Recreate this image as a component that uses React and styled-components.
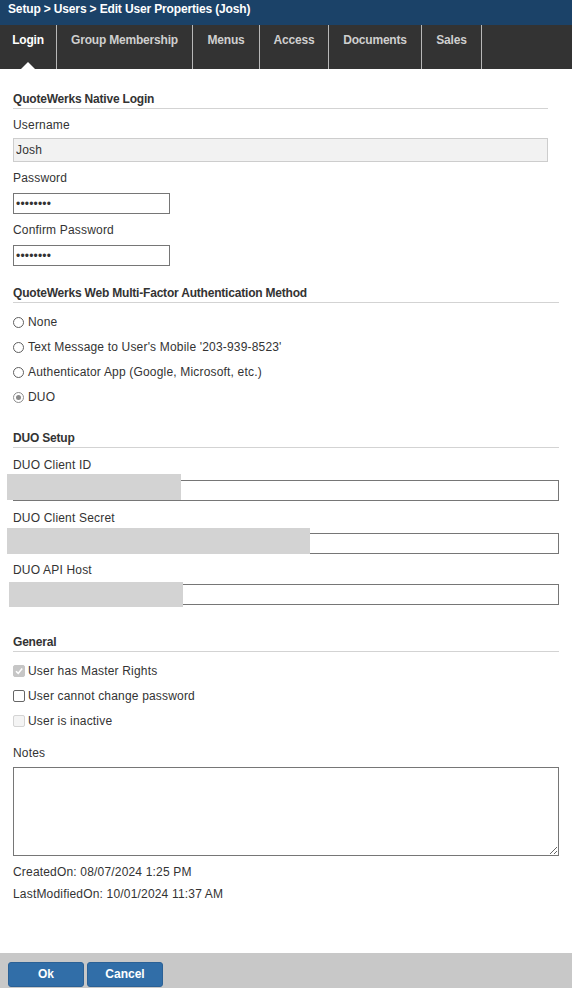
import React from "react";
import styled, { createGlobalStyle, css } from "styled-components";

const GlobalStyle = createGlobalStyle`
  html, body {
    margin: 0;
    padding: 0;
    background: #fff;
  }
  body {
    font-family: "Liberation Sans", Arial, sans-serif;
    font-size: 12px;
    letter-spacing: 0.18px;
    color: #333;
  }
  * {
    box-sizing: border-box;
  }
`;

const tabs = [
  { label: "Login", width: 57, active: true },
  { label: "Group Membership", width: 136 },
  { label: "Menus", width: 67 },
  { label: "Access", width: 69 },
  { label: "Documents", width: 93 },
  { label: "Sales", width: 60 },
];

const mfaOptions = [
  { label: "None" },
  { label: "Text Message to User's Mobile '203-939-8523'" },
  { label: "Authenticator App (Google, Microsoft, etc.)" },
  { label: "DUO", checked: true },
];

const duoFields = [
  { label: "DUO Client ID", top: 10, gap: 8, hide: { top: -6, left: -6, w: 174, h: 26 } },
  { label: "DUO Client Secret", top: 10, gap: 8, hide: { top: -5, left: -6, w: 303, h: 26 } },
  { label: "DUO API Host", top: 9, gap: 7, hide: { top: -2, left: -4, w: 174, h: 25 } },
];

export default function App() {
  return (
    <Page>
      <GlobalStyle />
      <TitleBar>Setup &gt; Users &gt; Edit User Properties (Josh)</TitleBar>
      <TabBar>
        {tabs.map((t) => (
          <Tab key={t.label} $w={t.width} $active={t.active}>
            {t.label}
          </Tab>
        ))}
      </TabBar>

      <Form>
        <Section $w={535}>
          <SectionTitle $top={0}>QuoteWerks Native Login</SectionTitle>
          <Label $top={9}>Username</Label>
          <TextInput $top={6} $h={24} $muted readOnly value='Josh' />
          <Label $top={9}>Password</Label>
          <TextInput type='password' $top={8} $h={21} $w={157} readOnly value='12345678' />
          <Label $top={9}>Confirm Password</Label>
          <TextInput type='password' $top={8} $h={21} $w={157} readOnly value='12345678' />
        </Section>

        <SectionTitle $top={20}>QuoteWerks Web Multi-Factor Authentication Method</SectionTitle>
        {mfaOptions.map((o, i) => (
          <OptionRow key={o.label} $top={i === 0 ? 12 : 11}>
            <RadioMark $checked={o.checked} />
            {o.label}
          </OptionRow>
        ))}

        <SectionTitle $top={27}>DUO Setup</SectionTitle>
        {duoFields.map((f) => (
          <React.Fragment key={f.label}>
            <Label $top={f.top}>{f.label}</Label>
            <InputWrap $top={f.gap}>
              <TextInput $top={0} $h={21} readOnly value='' />
              <Redacted $top={f.hide.top} $left={f.hide.left} $w={f.hide.w} $h={f.hide.h} />
            </InputWrap>
          </React.Fragment>
        ))}

        <SectionTitle $top={30}>General</SectionTitle>
        <OptionRow $top={12}>
          <CheckMark $checked $disabled>
            <svg width='10' height='10' viewBox='0 0 10 10'>
              <polyline points='2,5.2 4.2,7.4 8.2,2.6' fill='none' stroke='#fff' strokeWidth='1.6' />
            </svg>
          </CheckMark>
          User has Master Rights
        </OptionRow>
        <OptionRow $top={11}>
          <CheckMark />
          User cannot change password
        </OptionRow>
        <OptionRow $top={11}>
          <CheckMark $disabled />
          User is inactive
        </OptionRow>

        <Label $top={18}>Notes</Label>
        <Notes />

        <Meta $top={9}>CreatedOn: 08/07/2024 1:25 PM</Meta>
        <Meta $top={8}>LastModifiedOn: 10/01/2024 11:37 AM</Meta>
      </Form>

      <Footer>
        <Button>Ok</Button>
        <Button>Cancel</Button>
      </Footer>
    </Page>
  );
}

const Page = styled.div`
  min-height: 100vh;
  display: flex;
  flex-direction: column;
`;

const TitleBar = styled.header`
  height: 25px;
  padding: 2px 8px 0;
  background: #1b4268;
  color: #fff;
  font-weight: bold;
  line-height: 14px;
  letter-spacing: -0.15px;
`;

const TabBar = styled.nav`
  display: flex;
  height: 44px;
  background: #333;
`;

const Tab = styled.div`
  position: relative;
  width: ${({ $w }) => $w}px;
  border-right: 1px solid #b8b8b8;
  padding-top: 8px;
  text-align: center;
  font-weight: bold;
  line-height: 14px;
  letter-spacing: -0.2px;
  white-space: nowrap;
  color: ${({ $active }) => ($active ? "#fff" : "#cfcfcf")};

  ${({ $active }) =>
    $active &&
    css`
      &::after {
        content: "";
        position: absolute;
        bottom: 0;
        left: 50%;
        transform: translateX(-50%);
        border-left: 7px solid transparent;
        border-right: 7px solid transparent;
        border-bottom: 7px solid #fff;
      }
    `}
`;

const Form = styled.main`
  display: flex;
  flex-direction: column;
  padding: 23px 13px 0;
`;

const Section = styled.section`
  display: flex;
  flex-direction: column;
  width: ${({ $w }) => $w}px;
`;

const SectionTitle = styled.h3`
  margin: ${({ $top }) => $top}px 0 0;
  padding-bottom: 2px;
  border-bottom: 1px solid #d3d3d3;
  font-size: 12px;
  line-height: 14px;
  font-weight: bold;
  letter-spacing: -0.2px;
  color: #333;
`;

const Label = styled.label`
  display: block;
  margin-top: ${({ $top }) => $top}px;
  line-height: 14px;
`;

const TextInput = styled.input`
  display: block;
  margin: ${({ $top }) => $top}px 0 0;
  width: ${({ $w }) => ($w ? `${$w}px` : "100%")};
  height: ${({ $h }) => $h}px;
  padding: 0 2px;
  border: 1px solid ${({ $muted }) => ($muted ? "#cdcdcd" : "#767676")};
  border-radius: 0;
  background: ${({ $muted }) => ($muted ? "#f2f2f2" : "#fff")};
  font-family: "Liberation Sans", Arial, sans-serif;
  font-size: 12px;
  letter-spacing: 0.18px;
  color: #333;
  outline: none;
`;

const InputWrap = styled.div`
  position: relative;
  margin-top: ${({ $top }) => $top}px;
`;

const Redacted = styled.div`
  position: absolute;
  top: ${({ $top }) => $top}px;
  left: ${({ $left }) => $left}px;
  width: ${({ $w }) => $w}px;
  height: ${({ $h }) => $h}px;
  background: #d3d3d3;
`;

const OptionRow = styled.label`
  display: flex;
  align-items: center;
  gap: 4px;
  height: 14px;
  margin-top: ${({ $top }) => $top}px;
  line-height: 14px;
  white-space: nowrap;
`;

const RadioMark = styled.span`
  position: relative;
  flex: none;
  width: 11px;
  height: 11px;
  border-radius: 50%;
  border: 1px solid ${({ $checked }) => ($checked ? "#8d8d8d" : "#5f5f5f")};
  background: #fff;

  ${({ $checked }) =>
    $checked &&
    css`
      &::after {
        content: "";
        position: absolute;
        inset: 2px;
        border-radius: 50%;
        background: #8a8a8a;
      }
    `}
`;

const CheckMark = styled.span`
  display: flex;
  align-items: center;
  justify-content: center;
  flex: none;
  width: 12px;
  height: 12px;
  margin-right: -1px;
  border-radius: 2px;
  border: 1px solid ${({ $disabled, $checked }) => ($checked ? "#c6c6c6" : $disabled ? "#d4d4d4" : "#666")};
  background: ${({ $disabled, $checked }) => ($checked ? "#c6c6c6" : $disabled ? "#f4f4f4" : "#fff")};
`;

const Notes = styled.textarea`
  display: block;
  margin-top: 7px;
  width: 100%;
  height: 89px;
  border: 1px solid #767676;
  border-radius: 0;
  font-family: "Liberation Sans", Arial, sans-serif;
  font-size: 12px;
  outline: none;
`;

const Meta = styled.div`
  margin-top: ${({ $top }) => $top}px;
  line-height: 14px;
`;

const Footer = styled.footer`
  display: flex;
  gap: 3px;
  margin-top: auto;
  padding: 9px 8px 1px;
  background: #c8c8c8;
`;

const Button = styled.button`
  width: 76px;
  height: 25px;
  padding: 0 0 1px;
  border: 1px solid #2b6196;
  border-radius: 3px;
  background: #316ea8;
  color: #fff;
  font-family: "Liberation Sans", Arial, sans-serif;
  font-size: 12px;
  font-weight: bold;
`;
